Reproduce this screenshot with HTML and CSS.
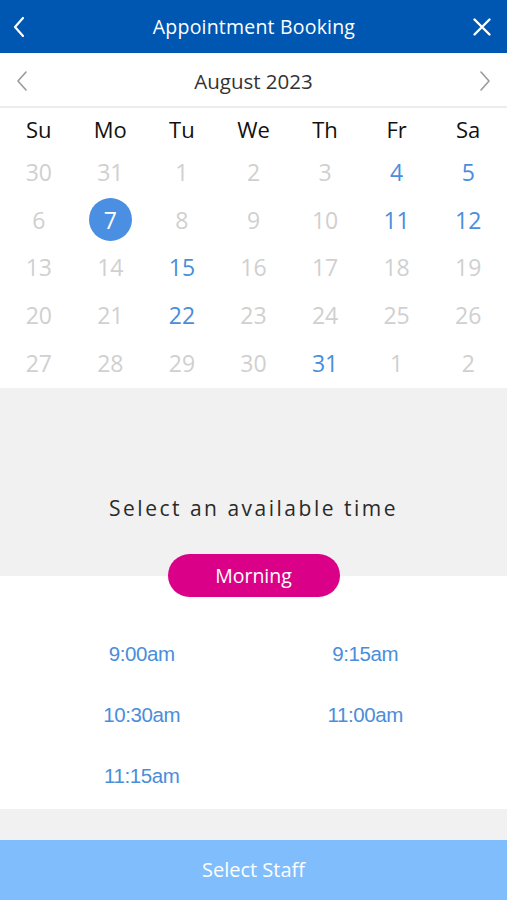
FILE: index.html
```html
<!DOCTYPE html>
<html>
<head>
<meta charset="utf-8">
<link rel="stylesheet" href="styles.css">
</head>
<body>
<div class="app">
  <header class="topbar">
    <svg class="icon back" width="14" height="22" viewBox="0 0 14 22"><path d="M11 2 L3 11 L11 20" fill="none" stroke="#fff" stroke-width="2.2" stroke-linecap="round" stroke-linejoin="round"/></svg>
    <h1 class="title">Appointment Booking</h1>
    <svg class="icon close" width="20" height="20" viewBox="0 0 20 20"><path d="M2.5 2.5 L17.5 17.5 M17.5 2.5 L2.5 17.5" fill="none" stroke="#fff" stroke-width="2.4" stroke-linecap="round"/></svg>
  </header>
  <div class="monthbar">
    <svg class="mchev" width="14" height="22" viewBox="0 0 14 22"><path d="M11 2 L3 11 L11 20" fill="none" stroke="#9a9a9a" stroke-width="1.6" stroke-linecap="round" stroke-linejoin="round"/></svg>
    <div class="month">August 2023</div>
    <svg class="mchev" width="14" height="22" viewBox="0 0 14 22"><path d="M3 2 L11 11 L3 20" fill="none" stroke="#9a9a9a" stroke-width="1.6" stroke-linecap="round" stroke-linejoin="round"/></svg>
  </div>
  <div class="calendar">
    <div class="wd">Su</div><div class="wd">Mo</div><div class="wd">Tu</div><div class="wd">We</div><div class="wd">Th</div><div class="wd">Fr</div><div class="wd">Sa</div>
    <div class="d">30</div><div class="d">31</div><div class="d">1</div><div class="d">2</div><div class="d">3</div><div class="d av">4</div><div class="d av">5</div>
    <div class="d">6</div><div class="d sel"><span>7</span></div><div class="d">8</div><div class="d">9</div><div class="d">10</div><div class="d av">11</div><div class="d av">12</div>
    <div class="d">13</div><div class="d">14</div><div class="d av">15</div><div class="d">16</div><div class="d">17</div><div class="d">18</div><div class="d">19</div>
    <div class="d">20</div><div class="d">21</div><div class="d av">22</div><div class="d">23</div><div class="d">24</div><div class="d">25</div><div class="d">26</div>
    <div class="d">27</div><div class="d">28</div><div class="d">29</div><div class="d">30</div><div class="d av">31</div><div class="d">1</div><div class="d">2</div>
  </div>
  <section class="prompt">
    <div class="prompt-text">Select an available time</div>
  </section>
  <section class="slots">
    <div class="pill">Morning</div>
    <div class="times">
      <div class="t">9:00am</div><div class="t">9:15am</div>
      <div class="t">10:30am</div><div class="t">11:00am</div>
      <div class="t">11:15am</div>
    </div>
  </section>
  <div class="spacer"></div>
  <footer class="cta">Select Staff</footer>
</div>
</body>
</html>
```

FILE: styles.css
```css
* { box-sizing: border-box; margin: 0; padding: 0; }
html, body { width: 507px; height: 900px; overflow: hidden; }
body { font-family: "Open Sans", "Noto Sans", sans-serif; background: #f1f1f1; }
.app { display: flex; flex-direction: column; height: 900px; }

.topbar {
  height: 53px; background: #0057b1; display: flex; align-items: center;
  justify-content: space-between; padding: 0 15px 0 12px;
}
.title { font-weight: 400; font-size: 19.5px; color: #fff; letter-spacing: 0.2px; margin-left: 10px; }
.icon { display: block; }

.monthbar {
  height: 55px; background: #fff; display: flex; align-items: center;
  justify-content: space-between; padding: 2px 15px 0; border-bottom: 2px solid #ececec;
}
.month { font-size: 20.5px; color: #333; }

.calendar {
  background: #fff; display: grid; grid-template-columns: repeat(7, 1fr);
  grid-template-rows: 41px repeat(5, 47.8px); padding: 0 3px;
}
.wd { font-size: 22px; color: #111; display: flex; align-items: center; justify-content: center; padding-top: 1px; }
.d { font-size: 23px; color: #d0d0d0; display: flex; align-items: center; justify-content: center; padding-bottom: 2px; }
.d.av { color: #4a8edb; }
.d.sel span {
  width: 43px; height: 43px; border-radius: 50%; background: #4a8fe2; color: #fff;
  display: flex; align-items: center; justify-content: center;
}

.prompt { height: 188px; background: #f1f1f1; display: flex; align-items: flex-end; justify-content: center; padding-bottom: 54px; }
.prompt-text { font-size: 21px; color: #2a2a2a; letter-spacing: 2.5px; }

.slots { background: #fff; height: 233px; display: flex; flex-direction: column; align-items: center; }
.pill {
  width: 172px; height: 43px; border-radius: 22px; background: #da0088; color: #fff;
  font-size: 19.5px; display: flex; align-items: center; justify-content: center;
  margin-top: -22px;
}
.times {
  width: 100%; display: grid; grid-template-columns: 1fr 1fr; grid-auto-rows: 61px;
  padding: 27px 30px 0 30px;
}
.t { font-family: "Liberation Sans", Arial, sans-serif; font-size: 20.5px; color: #4a8edb; display: flex; align-items: center; justify-content: center; letter-spacing: -0.4px; }

.spacer { height: 31px; background: #f1f1f1; }
.cta {
  flex: 1; background: #80bdfc; color: #fff; font-size: 20px;
  display: flex; align-items: center; justify-content: center;
}
```
